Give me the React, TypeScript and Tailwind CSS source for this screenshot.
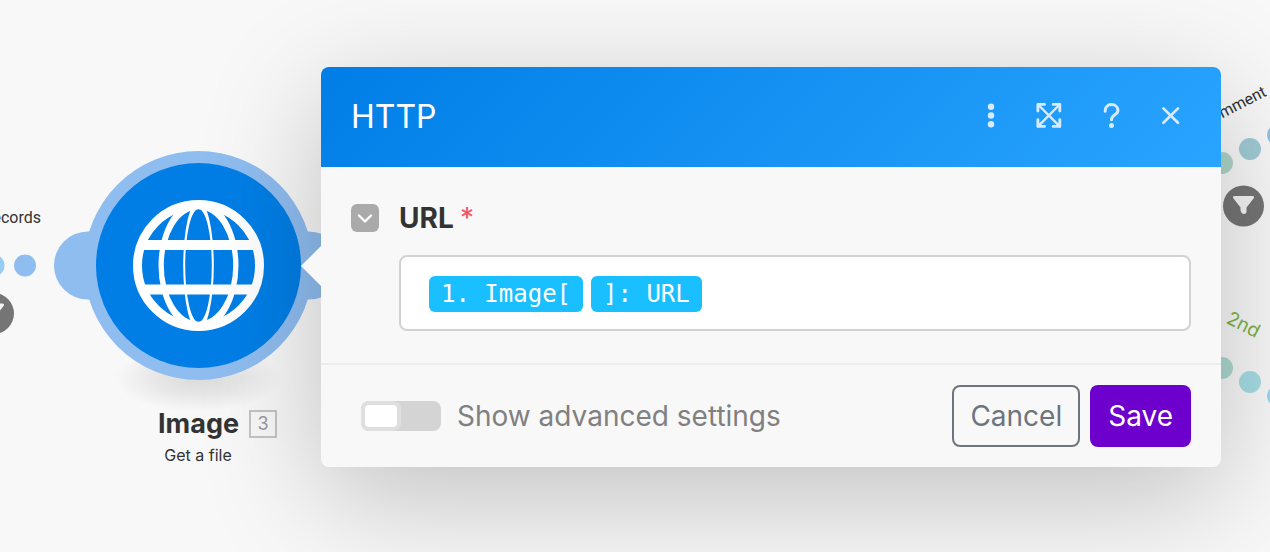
import React from "react";

function FunnelBadge({ cx, cy }: { cx: number; cy: number }) {
  return (
    <g transform={`translate(${cx} ${cy})`}>
      <circle r="20.5" fill="#757575" />
      <path
        d="M-9 -10H9Q11.5 -9.500 10 -7.500L3 1.500V6Q2.500 8.500 0 8Q-2.500 7 -3 4.500V1.500L-10 -7.500Q-11.500 -9.500 -9 -10Z"
        fill="#f4f4f4"
      />
    </g>
  );
}

function Globe() {
  return (
    <g transform="translate(198.500 265.500)" fill="#fff">
      <clipPath id="globe-clip">
        <circle r="61" />
      </clipPath>
      <circle r="61" fill="none" stroke="#fff" strokeWidth="9" />
      <g clipPath="url(#globe-clip)" fillRule="evenodd">
        <path d="M-40 0A40 65.500 0 0 1 40 0A40 65.500 0 0 1 -40 0ZM-34.700 0A34.700 56.300 0 0 0 34.700 0A34.700 56.300 0 0 0 -34.700 0Z" />
        <path d="M-15.300 0A15.300 65 0 0 1 15.300 0A15.300 65 0 0 1 -15.300 0ZM-13.300 0A13.300 56.500 0 0 0 13.300 0A13.300 56.500 0 0 0 -13.300 0Z" />
        <rect x="-61" y="-25.500" width="122" height="10" />
        <rect x="-61" y="19" width="122" height="10" />
      </g>
    </g>
  );
}

function HttpModule() {
  return (
    <div className="absolute top-0 left-0 w-[330px] text-[#333]">
      <svg width="330" height="552" viewBox="0 0 330 552" className="block" aria-hidden="true">
        <defs>
          <radialGradient id="ground">
            <stop offset="0" stopColor="#000" stopOpacity="0.12" />
            <stop offset="0.5" stopColor="#000" stopOpacity="0.07" />
            <stop offset="1" stopColor="#000" stopOpacity="0" />
          </radialGradient>
        </defs>
        <ellipse cx="198" cy="378" rx="84" ry="34" fill="url(#ground)" />
        <circle cx="-6.500" cy="265.500" r="11" fill="#97cdf5" />
        <circle cx="25" cy="265.500" r="11" fill="#8fbdf0" />
        <FunnelBadge cx={-6.5} cy={313.5} />
        <g fill="#8fbdf0">
          <path d="M100 231.500H88A34 34 0 0 0 88 299.500H100Z" />
          <path d="M297 231.500H309A34 34 0 0 1 309 299.500H297Z" />
          <circle cx="198.500" cy="265.500" r="114.500" />
        </g>
        <circle cx="198.500" cy="265.500" r="102.500" fill="#007ee6" />
        <Globe />
      </svg>
      <span className="absolute top-[206px] right-[289px] font-[Roboto,sans-serif] text-base leading-6">
        records
      </span>
      <div className="absolute top-[408px] left-[158px] flex items-center gap-2.5">
        <span className="text-[27px] leading-8 font-bold">Image</span>
        <span className="flex size-7 items-center justify-center border-2 border-[#c4c4c4] text-lg leading-none text-[#999]">
          3
        </span>
      </div>
      <p className="absolute top-[443px] left-[98px] w-[200px] text-center text-base leading-6">Get a file</p>
    </div>
  );
}

function Routes() {
  return (
    <div className="absolute top-0 right-0 w-[70px]">
      <svg width="70" height="552" viewBox="1200 0 70 552" className="block" aria-hidden="true">
        <circle cx="1222" cy="163" r="11" fill="#aed5c7" />
        <circle cx="1250" cy="149" r="11" fill="#a0cbd5" />
        <circle cx="1278" cy="135" r="11" fill="#92c1e2" />
        <FunnelBadge cx={1243.5} cy={206} />
        <circle cx="1222" cy="368" r="11" fill="#aed9d0" />
        <circle cx="1250" cy="382" r="11" fill="#a5dde4" />
        <circle cx="1278" cy="396" r="11" fill="#98d5f2" />
      </svg>
      <span className="absolute top-[79px] right-[5px] origin-right -rotate-[27deg] font-[Roboto,sans-serif] text-base leading-6 text-[#333]">
        comment
      </span>
      <span className="absolute top-[313px] left-[26px] rotate-[27deg] text-[19px] leading-6 text-[#7cb342]">
        2nd
      </span>
    </div>
  );
}

function HeaderButton({ label, children }: { label: string; children: React.ReactNode }) {
  return (
    <button type="button" aria-label={label} className="flex size-[30px] items-center justify-center text-[#d6ebff]">
      <svg
        width="30"
        height="30"
        viewBox="0 0 30 30"
        fill="none"
        stroke="currentColor"
        strokeWidth="2.700"
        strokeLinecap="round"
        strokeLinejoin="round"
      >
        {children}
      </svg>
    </button>
  );
}

function Dialog() {
  return (
    <section
      aria-label="HTTP"
      className="relative mt-[67px] mr-[49px] ml-[321px] rounded-lg bg-[#f8f8f8] shadow-[0_30px_120px_rgba(0,0,0,0.23)]"
    >
      <svg width="21" height="42" viewBox="0 0 21 42" className="absolute top-[178px] -left-5" aria-hidden="true">
        <path d="M0 21L21 0V42Z" fill="#f8f8f8" />
      </svg>
      <header className="flex h-[100px] items-center justify-between rounded-t-lg bg-[linear-gradient(135deg,#007ee6,#29a4ff)] pr-[35px] pl-[30px]">
        <h1 className="text-[32px] leading-10 font-normal text-white">HTTP</h1>
        <div className="flex gap-[30px]">
          <HeaderButton label="More options">
            <g fill="currentColor" stroke="none">
              <circle cx="15" cy="4.700" r="3.200" />
              <circle cx="15" cy="13.500" r="3.200" />
              <circle cx="15" cy="22.300" r="3.200" />
            </g>
          </HeaderButton>
          <HeaderButton label="Expand">
            <path d="M2 2.500L23.700 24.300M23.700 2.500L2 24.300" strokeWidth="2.400" />
            <path
              d="M1.900 9V2.400H8.500M17.200 2.400H23.800V9M23.800 17.800V24.400H17.200M8.500 24.400H1.900V17.800"
              strokeWidth="2.900"
            />
          </HeaderButton>
          <HeaderButton label="Help">
            <path
              d="M9.200 9.200C8.700 5.300 11.600 2.600 15.500 2.600C19.300 2.600 21.900 5.200 21.900 8.400C21.900 13 15.500 12.600 15.500 17.700"
              strokeWidth="3"
            />
            <circle cx="15.500" cy="23.400" r="2.500" fill="currentColor" stroke="none" />
          </HeaderButton>
          <HeaderButton label="Close">
            <path d="M7.400 6.400L22 20.800M22 6.400L7.400 20.800" />
          </HeaderButton>
        </div>
      </header>

      <div className="px-[30px] pt-8 pb-8">
        <div className="flex items-center gap-5">
          <button
            type="button"
            aria-label="Collapse URL"
            className="flex size-7 items-center justify-center rounded-md bg-[#aaa]"
          >
            <svg width="18" height="12" viewBox="0 0 18 12" fill="none" stroke="#fff" strokeWidth="2.400" strokeLinecap="round" strokeLinejoin="round">
              <path d="M3 3.500L9 9.500L15 3.500" />
            </svg>
          </button>
          <label htmlFor="url" className="flex gap-1.5 text-[28px] leading-[38px] font-bold text-[#333]">
            URL <span className="font-medium text-[#f15b6c]">*</span>
          </label>
        </div>
        <div className="mt-[18px] ml-12 flex h-[76px] items-center gap-2 rounded-lg border-2 border-[#d2d2d2] bg-white px-7 pt-0.5 font-['DejaVu_Sans_Mono',monospace] text-2xl">
          <span className="shrink-0 rounded-md bg-[#19bfff] px-3 leading-9 whitespace-pre text-white">1. Image[</span>
          <span className="shrink-0 rounded-md bg-[#19bfff] px-3 leading-9 whitespace-pre text-white">]: URL</span>
          <input id="url" type="text" className="min-w-0 flex-1 bg-transparent outline-none" />
        </div>
      </div>

      <footer className="flex items-center gap-2.5 border-t-2 border-[#ececec] pt-5 pr-[30px] pb-5 pl-10 text-[28px] leading-10">
        <label className="mr-auto flex items-center gap-4 text-[#808080]">
          <input type="checkbox" role="switch" className="peer sr-only" />
          <span className="flex h-[30px] w-20 rounded-lg bg-[#d4d4d4]">
            <span className="h-[30px] w-10 rounded-lg border-4 border-[#dfdfdf] bg-white" />
          </span>
          Show advanced settings
        </label>
        <button type="button" className="h-[62px] rounded-lg border-2 border-[#6c757d] px-4 text-[#6c757d]">
          Cancel
        </button>
        <button type="button" className="h-[62px] rounded-lg bg-[#6d00cc] px-[18px] text-white">
          Save
        </button>
      </footer>
    </section>
  );
}

export default function App() {
  return (
    <main className="relative flow-root min-h-screen overflow-hidden bg-[#f8f8f8] font-[Inter,sans-serif]">
      <HttpModule />
      <Routes />
      <Dialog />
    </main>
  );
}
